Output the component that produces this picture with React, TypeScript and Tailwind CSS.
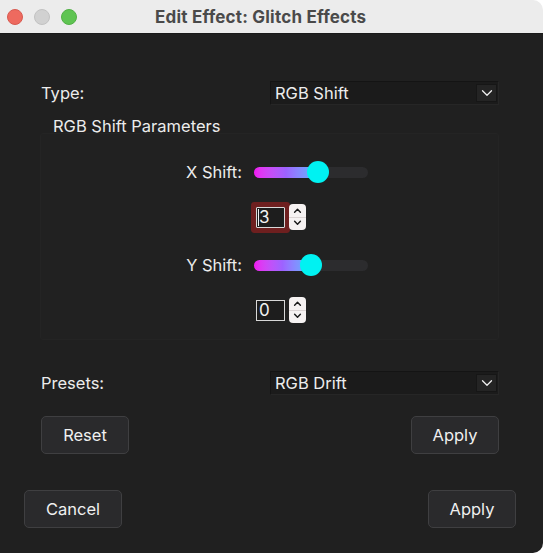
import { ChevronDown, ChevronUp } from 'lucide-react'

function TrafficLights() {
  return (
    <div className="flex items-center gap-[11px] pl-[7px]">
      <span className="w-[16px] h-[16px] rounded-full bg-[#ee6a5f] border border-[#d85a50]" />
      <span className="w-[16px] h-[16px] rounded-full bg-[#d1d1d1] border border-[#c2c2c2]" />
      <span className="w-[16px] h-[16px] rounded-full bg-[#5fc452] border border-[#52b046]" />
    </div>
  )
}

function Combo({ value }: { value: string }) {
  return (
    <div className="w-[229px] h-[24px] flex items-center justify-between bg-[#1b1b1b] border border-[#141414] border-b-[#262626] border-r-[#262626] pl-[4px] pr-[1px]">
      <span className="text-[16.5px] leading-none text-[#ededed]">{value}</span>
      <span className="w-[21px] h-[18px] flex items-center justify-center bg-[#242424] border border-[#161616]">
        <ChevronDown size={18} strokeWidth={1.75} className="text-[#eeeeee]" />
      </span>
    </div>
  )
}

function Slider({ label, fill }: { label: string; fill: string }) {
  return (
    <div className="flex items-center h-[24px]">
      <span className="w-[201px] text-right text-[16.5px] leading-[20px] text-[#ececec]">{label}</span>
      <div className="ml-[12px] relative w-[114px] h-[11px] rounded-full bg-[#2c2c2e]">
        <div className={`h-full rounded-l-full bg-linear-to-r from-[#f014f0] via-[#9d62ff] to-[#44b8ff] ${fill}`} />
        {/* thumb */}
        <span className={`absolute top-1/2 -translate-y-1/2 -ml-[11px] w-[22px] h-[22px] rounded-full bg-[#00f2f2] ${fill === 'w-[64px]' ? 'left-[64px]' : 'left-[57px]'}`} />
      </div>
    </div>
  )
}

function SpinBox({ value, focused }: { value: string; focused?: boolean }) {
  return (
    <div className="flex items-center pl-[215px] gap-[4px]">
      <div
        className={
          focused
            ? 'w-[29px] h-[21px] flex items-center border border-[#d8d8d8] bg-[#1d1d1d] ring-[5px] ring-[#6e1f1f] rounded-[1px]'
            : 'w-[29px] h-[21px] flex items-center border border-[#d8d8d8] bg-[#1d1d1d]'
        }
      >
        {focused && <span className="ml-[1px] w-[1px] h-[17px] bg-[#f0f0f0]" />}
        <span className={focused ? 'text-[17px] leading-none text-[#f2f2f2]' : 'ml-[2px] text-[17px] leading-none text-[#f2f2f2]'}>
          {value}
        </span>
      </div>
      <div className="w-[17px] h-[26px] flex flex-col items-center justify-between rounded-[4px] bg-[#f6f2f2] py-[1px]">
        <ChevronUp size={13} strokeWidth={3} className="text-[#1a1a1a]" />
        <span className="w-full h-[1px] bg-[#dcd4d4]" />
        <ChevronDown size={13} strokeWidth={3} className="text-[#1a1a1a]" />
      </div>
    </div>
  )
}

function Button({ children, w }: { children: string; w: string }) {
  return (
    <button className={`h-[38px] ${w} rounded-[5px] bg-[#2a2a2c] border border-[#3f3f41] text-[16.5px] leading-[20px] text-[#f0f0f0]`}>
      {children}
    </button>
  )
}

export default function App() {
  return (
    <div className="w-[544px] h-[553px] bg-white font-['Inter','Noto_Sans',sans-serif]">
      <div className="w-[543px] h-full flex flex-col rounded-tr-[10px] rounded-br-[10px] overflow-hidden">
        {/* Title bar */}
        <div className="h-[34px] shrink-0 flex items-center bg-[#ececec] border-b border-[#1a1a1a]">
          <TrafficLights />
          <span className="ml-[78px] text-[17px] leading-[20px] font-bold text-[#4a4a4a] tracking-[0.2px]">
            Edit Effect: Glitch Effects
          </span>
        </div>

        {/* Body */}
        <div className="flex-1 bg-[#202020] flex flex-col pt-[47px]">
          <div className="flex items-center pl-[41px] h-[24px]">
            <span className="w-[229px] text-[16.5px] leading-[20px] text-[#ececec]">Type:</span>
            <Combo value="RGB Shift" />
          </div>

          <div className="mt-[11px] pl-[53px] text-[16.5px] leading-[20px] text-[#ececec]">RGB Shift Parameters</div>

          {/* Parameters group */}
          <div className="ml-[40px] -mt-[3px] w-[459px] h-[207px] bg-[#212121] border border-[#242424] rounded-[3px] pt-[26px]">
            <Slider label="X Shift:" fill="w-[64px]" />
            <div className="mt-[18px] h-[30px] flex items-center">
              <SpinBox value="3" focused />
            </div>
            <div className="mt-[21px]">
              <Slider label="Y Shift:" fill="w-[57px]" />
            </div>
            <div className="mt-[20px]">
              <SpinBox value="0" />
            </div>
          </div>

          <div className="mt-[31px] flex items-center pl-[41px] h-[24px]">
            <span className="w-[229px] text-[16.5px] leading-[20px] text-[#ececec]">Presets:</span>
            <Combo value="RGB Drift" />
          </div>

          <div className="mt-[21px] flex justify-between pl-[41px] pr-[44px]">
            <Button w="w-[88px]">Reset</Button>
            <Button w="w-[88px]">Apply</Button>
          </div>

          <div className="mt-[36px] flex justify-between pl-[24px] pr-[27px]">
            <Button w="w-[98px]">Cancel</Button>
            <Button w="w-[88px]">Apply</Button>
          </div>
        </div>
      </div>
    </div>
  )
}
